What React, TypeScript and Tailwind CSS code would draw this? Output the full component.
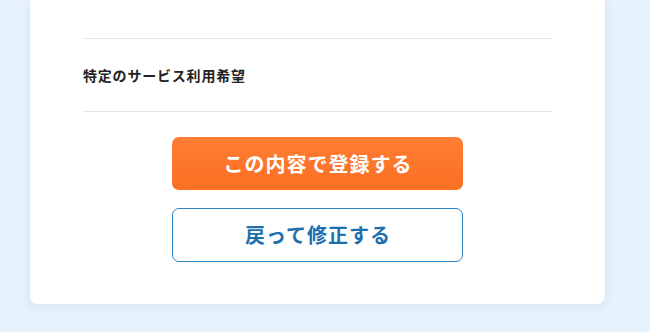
export default function App() {
  return (
    <div
      className="h-[332px] w-[650px] overflow-hidden bg-[#e6f2fc]"
      style={{ fontFamily: '"Noto Sans CJK JP", "Noto Sans", sans-serif' }}
    >
      <div className="ml-[30px] w-[575px] rounded-b-[8px] bg-white px-[53px] pt-[38px] pb-[42px] shadow-[0_2px_10px_rgba(120,160,200,0.18)]">
        <div className="border-t border-[#e3e3e3]" />
        <div className="flex h-[72px] items-center text-[14px] font-bold tracking-[0.8px] text-[#222]">
          特定のサービス利用希望
        </div>
        <div className="border-t border-[#e3e3e3]" />

        <div className="mt-[25px] flex flex-col items-center gap-[18px]">
          <button className="flex h-[53px] w-[291px] items-center justify-center rounded-[7px] bg-gradient-to-b from-[#ff7d33] to-[#fa6f22] pl-[1px] text-[20px] font-bold tracking-[1px] text-white">
            この内容で登録する
          </button>
          <button className="flex h-[54px] w-[291px] items-center justify-center rounded-[7px] border border-[#2b84c6] bg-white pl-[1px] text-[20px] font-bold tracking-[1px] text-[#1d6fae]">
            戻って修正する
          </button>
        </div>
      </div>
    </div>
  );
}
